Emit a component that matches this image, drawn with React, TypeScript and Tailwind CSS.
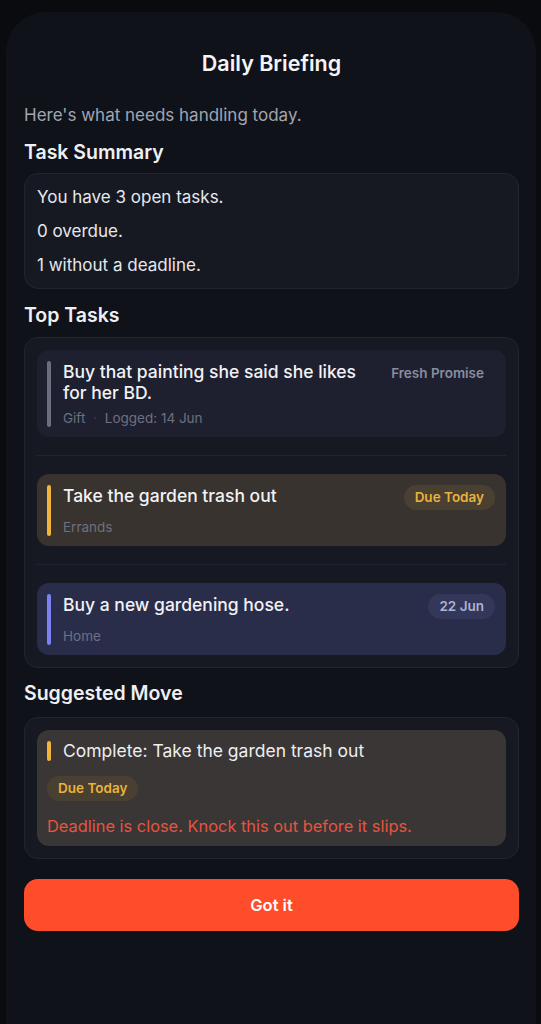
import React from "react";

type Tone = "gray" | "amber" | "indigo";

const itemBg: Record<Tone, string> = {
  gray: "bg-[#1e2030]",
  amber: "bg-[#38332f]",
  indigo: "bg-[#2a2d4a]",
};
const barBg: Record<Tone, string> = {
  gray: "bg-[#6c6e80]",
  amber: "bg-[#f2b53c]",
  indigo: "bg-[#7c82f2]",
};

function Badge({ text, tone }: { text: string; tone: "plain" | "amber" | "indigo" }) {
  const cls =
    tone === "amber"
      ? "bg-[#4a4032] text-[#e9b23d]"
      : tone === "indigo"
      ? "bg-[#33375a] text-[#aeb2d2]"
      : "bg-transparent text-[#8a8d9e]";
  return (
    <span className={`inline-flex h-[25px] shrink-0 items-center rounded-full px-[11px] text-[13.5px] font-semibold leading-none ${cls}`}>
      {text}
    </span>
  );
}

function TaskItem({
  title,
  meta,
  tone,
  badge,
  badgeTone,
}: {
  title: string;
  meta: React.ReactNode;
  tone: Tone;
  badge: string;
  badgeTone: "plain" | "amber" | "indigo";
}) {
  return (
    <div className={`flex rounded-[12px] pl-[10px] pr-[11px] pt-[11px] pb-[10px] ${itemBg[tone]}`}>
      <div className={`w-[4px] shrink-0 rounded-full ${barBg[tone]}`} />
      <div className="ml-[12px] flex min-w-0 flex-1 flex-col">
        <div className="flex min-h-[27px] items-start justify-between gap-[14px]">
          <div className="text-[17.5px] font-medium leading-[21px] text-[#f1f2f5]">{title}</div>
          <Badge text={badge} tone={badgeTone} />
        </div>
        <div className="mt-[6px] text-[13.5px] leading-[18px] text-[#6d7081]">{meta}</div>
      </div>
    </div>
  );
}

export default function App() {
  return (
    <div className="min-h-[1024px] bg-[#0a0b0f] pt-[12px]" style={{ fontFamily: "Inter, 'Noto Sans', sans-serif" }}>
      <div className="ml-[6px] mr-[5px] min-h-[1012px] rounded-t-[40px] bg-[#10121a] pl-[18px] pr-[17px] pt-[38px]">
        <h1 className="text-center text-[21.5px] font-semibold leading-[26px] text-[#f4f5f7]">Daily Briefing</h1>

        <p className="mt-[28px] text-[17px] leading-[22px] text-[#a2a5b0]">Here's what needs handling today.</p>

        <h2 className="mt-[14px] text-[19.5px] font-semibold leading-[24px] text-[#eef0f3]">Task Summary</h2>
        <div className="mt-[9px] flex flex-col gap-[12px] rounded-[14px] border border-[#22252f] bg-[#171922] px-[12px] py-[12px] text-[17px] leading-[22px] text-[#e6e8ec]">
          <div>You have 3 open tasks.</div>
          <div>0 overdue.</div>
          <div>1 without a deadline.</div>
        </div>

        <h2 className="mt-[14px] text-[19.5px] font-semibold leading-[24px] text-[#eef0f3]">Top Tasks</h2>
        <div className="mt-[10px] rounded-[14px] border border-[#22252f] bg-[#171922] p-[12px]">
          <TaskItem
            title="Buy that painting she said she likes for her BD."
            meta={
              <span>
                Gift <span className="mx-[4px] text-[#3e4150]">·</span> Logged: 14 Jun
              </span>
            }
            tone="gray"
            badge="Fresh Promise"
            badgeTone="plain"
          />
          <div className="my-[18px] h-px bg-[#22252f]" />
          <TaskItem title="Take the garden trash out" meta="Errands" tone="amber" badge="Due Today" badgeTone="amber" />
          <div className="my-[18px] h-px bg-[#22252f]" />
          <TaskItem title="Buy a new gardening hose." meta="Home" tone="indigo" badge="22 Jun" badgeTone="indigo" />
        </div>

        <h2 className="mt-[13px] text-[19.5px] font-semibold leading-[24px] text-[#eef0f3]">Suggested Move</h2>
        <div className="mt-[12px] rounded-[14px] border border-[#22252f] bg-[#171922] p-[12px]">
          <div className="flex flex-col items-start rounded-[12px] bg-[#3a3636] px-[10px] pt-[10px] pb-[9px]">
            <div className="flex items-center">
              <div className="h-[20px] w-[4px] rounded-full bg-[#f2b53c]" />
              <div className="ml-[12px] text-[17.5px] leading-[22px] text-[#eceef1]">Complete: Take the garden trash out</div>
            </div>
            <div className="mt-[13px]">
              <Badge text="Due Today" tone="amber" />
            </div>
            <div className="mt-[14px] text-[16.4px] leading-[22px] text-[#e5553f]">Deadline is close. Knock this out before it slips.</div>
          </div>
        </div>

        <button className="mt-[20px] flex h-[52px] w-full items-center justify-center rounded-[14px] bg-[#ff4c2b] text-[16.5px] font-semibold text-white">
          Got it
        </button>
      </div>
    </div>
  );
}
